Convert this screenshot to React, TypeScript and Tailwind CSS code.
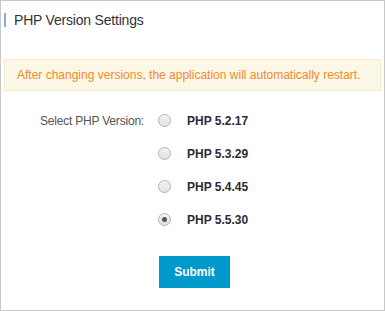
import React, { useState } from 'react';

const versions = ['PHP 5.2.17', 'PHP 5.3.29', 'PHP 5.4.45', 'PHP 5.5.30'];

const Radio: React.FC<{ checked: boolean }> = ({ checked }) => (
  <span className="flex h-[13px] w-[13px] items-center justify-center rounded-full border border-[#b4b4b4] bg-gradient-to-b from-[#f2f2f2] to-[#e2e2e2]">
    {checked && <span className="h-[5px] w-[5px] rounded-full bg-[#555]" />}
  </span>
);

export default function App() {
  const [selected, setSelected] = useState(3);

  return (
    <div
      className="w-[385px] h-[311px] border border-[#c9c9c9] bg-white"
      style={{ fontFamily: '"Liberation Sans", Arial, sans-serif' }}
    >
      {/* Title */}
      <div className="mt-[12px] flex items-center h-[14px]">
        <span className="ml-[3px] h-[14px] w-[2px] bg-[#86b1d6]" />
        <span className="ml-[8px] text-[14px] leading-[20px] tracking-[-0.2px] text-[#333]">PHP Version Settings</span>
      </div>

      {/* Notice */}
      <div className="mx-[3px] mt-[32px] flex h-[32px] items-center border border-[#f3ead0] bg-[#fdf8e6] pl-[12px] text-[12px] text-[#ef8a2f]">
        After changing versions, the application will automatically restart.
      </div>

      {/* Form */}
      <div className="mt-[13px]">
        {versions.map((v, i) => (
          <div key={v} className="flex h-[33px] items-center">
            <div className="w-[143px] text-right text-[12px] tracking-[-0.2px] text-[#555]">
              {i === 0 ? 'Select PHP Version:' : ''}
            </div>
            <button
              onClick={() => setSelected(i)}
              className="ml-[14px] flex items-center"
            >
              <Radio checked={selected === i} />
              <span className="ml-[16px] text-[12px] font-bold text-[#2b2b38]">{v}</span>
            </button>
          </div>
        ))}
        <button className="ml-[158px] mt-[20px] h-[32px] w-[71px] bg-[#0099cc] text-[12px] font-bold text-white">
          Submit
        </button>
      </div>
    </div>
  );
}
